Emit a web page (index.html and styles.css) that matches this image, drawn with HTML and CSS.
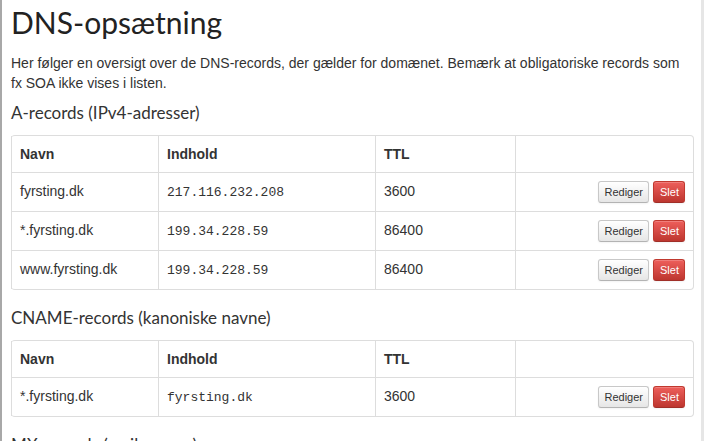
FILE: index.html
```html
<!DOCTYPE html>
<html lang="da">
<head>
<meta charset="utf-8">
<title>DNS-opsætning</title>
<link rel="stylesheet" href="styles.css">
</head>
<body>
<div class="frame">
  <main class="content">
    <h1 class="title">DNS-opsætning</h1>
    <p class="intro">Her følger en oversigt over de DNS-records, der gælder for domænet. Bemærk at obligatoriske records som fx SOA ikke vises i listen.</p>

    <h2 class="section">A-records (IPv4-adresser)</h2>
    <table class="records">
      <colgroup><col class="c1"><col class="c2"><col class="c3"><col class="c4"></colgroup>
      <thead>
        <tr><th>Navn</th><th>Indhold</th><th>TTL</th><th></th></tr>
      </thead>
      <tbody>
        <tr><td>fyrsting.dk</td><td><code class="mono">217.116.232.208</code></td><td>3600</td><td class="actions"><div class="btns"><button class="btn">Rediger</button><button class="btn btn-danger">Slet</button></div></td></tr>
        <tr><td>*.fyrsting.dk</td><td><code class="mono">199.34.228.59</code></td><td>86400</td><td class="actions"><div class="btns"><button class="btn">Rediger</button><button class="btn btn-danger">Slet</button></div></td></tr>
        <tr><td>www.fyrsting.dk</td><td><code class="mono">199.34.228.59</code></td><td>86400</td><td class="actions"><div class="btns"><button class="btn">Rediger</button><button class="btn btn-danger">Slet</button></div></td></tr>
      </tbody>
    </table>

    <h2 class="section">CNAME-records (kanoniske navne)</h2>
    <table class="records">
      <colgroup><col class="c1"><col class="c2"><col class="c3"><col class="c4"></colgroup>
      <thead>
        <tr><th>Navn</th><th>Indhold</th><th>TTL</th><th></th></tr>
      </thead>
      <tbody>
        <tr><td>*.fyrsting.dk</td><td><code class="mono">fyrsting.dk</code></td><td>3600</td><td class="actions"><div class="btns"><button class="btn">Rediger</button><button class="btn btn-danger">Slet</button></div></td></tr>
      </tbody>
    </table>

    <h2 class="section">MX-records (mailservere)</h2>
  </main>
  <div class="rail"></div>
</div>
</body>
</html>
```

FILE: styles.css
```css
html, body {
  margin: 0;
  padding: 0;
  background: #fff;
}

body {
  font-family: "Liberation Sans", Arial, sans-serif;
  font-size: 14px;
  line-height: 20px;
  color: #333;
}

.frame {
  display: flex;
  height: 100vh;
  overflow: hidden;
  border-left: 2px solid #a8a8a8;
  box-sizing: border-box;
}

.content {
  width: 682px;
  margin-left: 9px;
  flex: none;
}

.rail {
  width: 3px;
  margin-left: 8px;
  background: #e6e6e6;
  flex: none;
}

.title {
  margin: 2px 0 0;
  font-family: Lato, "Open Sans", sans-serif;
  font-weight: 400;
  font-size: 30px;
  line-height: 40px;
  color: #222;
}

.intro {
  margin: 11px 0 8px;
}

.section {
  margin: 0 0 10px;
  font-family: Lato, "Open Sans", sans-serif;
  font-weight: 400;
  font-size: 17px;
  line-height: 24px;
  color: #333;
}

.records {
  width: 682px;
  table-layout: fixed;
  border-collapse: separate;
  border-spacing: 0;
  border: 1px solid #ddd;
  border-left: 0;
  border-radius: 4px;
  margin-bottom: 16px;
}

.c1 { width: 147px; }
.c2 { width: 217px; }
.c3 { width: 140px; }
.c4 { width: 178px; }

.records th,
.records td {
  padding: 8px;
  text-align: left;
  vertical-align: top;
  border-left: 1px solid #ddd;
  line-height: 20px;
}

.records th {
  font-weight: bold;
}

.records tbody td {
  border-top: 1px solid #ddd;
}

.mono {
  font-family: "Liberation Mono", "Courier New", monospace;
  font-size: 13px;
}

.btns {
  display: flex;
  justify-content: flex-end;
  gap: 4px;
}

.btn {
  font-family: "Liberation Sans", Arial, sans-serif;
  font-size: 11px;
  line-height: 16px;
  padding: 2px 5px 2px 6px;
  margin: 0;
  color: #333;
  background: linear-gradient(#ffffff, #e6e6e6);
  border: 1px solid #c8c8c8;
  border-bottom-color: #b3b3b3;
  border-radius: 3px;
  box-shadow: inset 0 1px 0 rgba(255,255,255,.2), 0 1px 2px rgba(0,0,0,.05);
}

.btn-danger {
  color: #fff;
  background: linear-gradient(#ee5f5b, #bd362f);
  border-color: #c0392f #c0392f #a02f28;
}
```
